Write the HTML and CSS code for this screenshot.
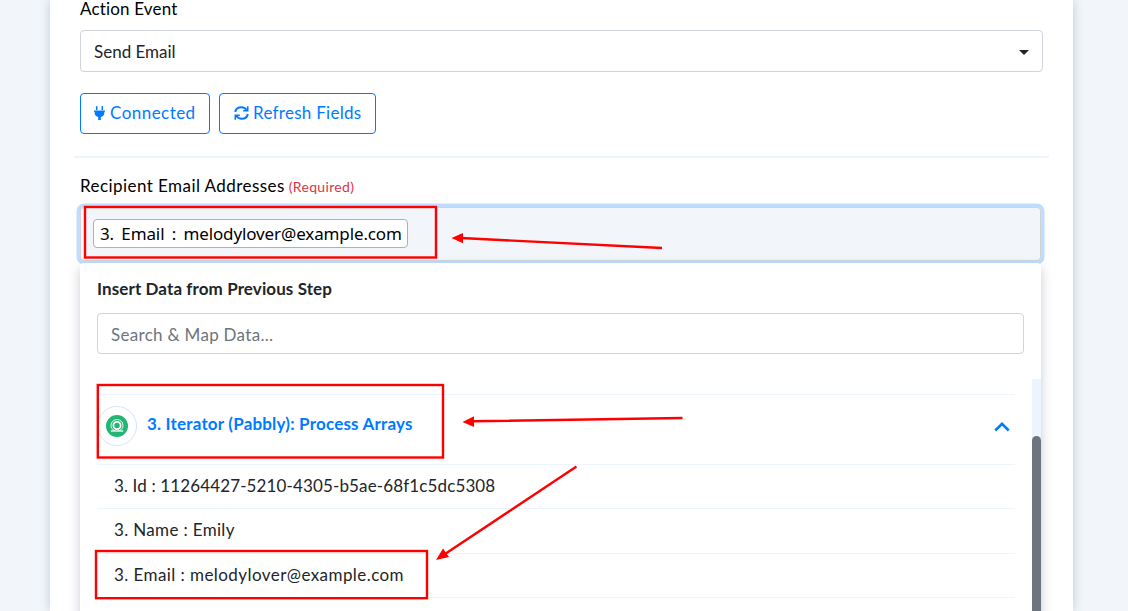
FILE: index.html
```html
<!DOCTYPE html>
<html lang="en">
<head>
<meta charset="utf-8">
<title>Action step</title>
<link rel="stylesheet" href="styles.css">
</head>
<body>
<main class="card">
  <div class="label action-label"><span class="t-action">Action Event</span></div>
  <div class="select"><span class="t-send">Send Email</span><i class="caret"></i></div>
  <div class="buttons">
    <button class="btn btn-connected">
      <svg width="11" height="14" viewBox="0 0 11 14" fill="currentColor"><path d="M2 .8Q2 0 2.75 0T3.5.8V4H2zM7.500.8Q7.500 0 8.250 0T9 .8V4H7.500zM0 4.500h11v1.300h-.7v1.100c0 2-1.300 3.500-3.500 4V14H4.200v-3.100C2 10.400.7 8.900.7 6.900V5.800H0z"/></svg>
      <span class="t-connected">Connected</span>
    </button>
    <button class="btn btn-refresh">
      <svg width="15" height="14" viewBox="0 0 15 14" fill="none" stroke="currentColor" stroke-width="2"><path d="M1.200 6C1.700 3.200 4.300 1.300 7.300 1.300c2.200 0 4 .9 5.200 2.700M13.800 8c-.5 2.800-3.100 4.700-6.100 4.700-2.200 0-4-.9-5.200-2.700"/><path d="M13.700.3v4.500H9.200M1.300 13.700V9.200h4.500" stroke-width="1.600"/></svg>
      <span class="t-refresh">Refresh Fields</span>
    </button>
  </div>
  <hr class="divider">
  <div class="label recipient-label"><span class="t-recipient">Recipient Email Addresses</span><span class="required">(Required)</span></div>
  <div class="field"><span class="chip"><span class="t-chip">3. Email : melodylover@example.com</span></span></div>
  <section class="dropdown">
    <div class="picker">
      <h2 class="title"><span class="t-title">Insert Data from Previous Step</span></h2>
      <div class="search"><span class="t-search">Search &amp; Map Data...</span></div>
    </div>
    <div class="scroller">
      <div class="list">
        <div class="group">
          <span class="app-icon">
            <svg width="22" height="22" viewBox="0 0 22 22"><circle cx="11" cy="11" r="11" fill="#22b573"/><g fill="none" stroke="#fff"><circle cx="11" cy="10.500" r="3.600" stroke-width="1.700"/><path d="M6.500 14.500A6 6 0 1 1 15.500 14.500" stroke-width=".9"/><path d="M4.800 16h12.400" stroke-width="1.300"/><path d="M7 14.500l2 1.300M15 14.500l-2 1.300" stroke-width=".8"/></g></svg>
          </span>
          <span class="t-group">3. Iterator (Pabbly): Process Arrays</span>
          <svg class="chevron" width="16" height="10" viewBox="0 0 16 10" fill="none" stroke="#007bff" stroke-width="2.600"><path d="M1.300 8.500L8 1.900l6.700 6.600"/></svg>
        </div>
        <div class="row"><span class="t-id">3. Id : 11264427-5210-4305-b5ae-68f1c5dc5308</span></div>
        <div class="row row-name"><span class="t-name">3. Name : Emily</span></div>
        <div class="row"><span class="t-email">3. Email : melodylover@example.com</span></div>
        <div class="row"></div>
      </div>
      <div class="track"><div class="thumb"></div></div>
    </div>
  </section>
</main>
<svg class="annotations" width="1128" height="611" viewBox="0 0 1128 611">
  <g fill="none" stroke="#f00" stroke-width="2.400">
    <rect x="85" y="207" width="351" height="50.500"/>
    <rect x="97.800" y="385" width="345.200" height="72.500"/>
    <rect x="96" y="551" width="331" height="47.200"/>
    <path d="M662 248L461 238M682.500 418L472 421.300M576.500 466.500L445 554"/>
  </g>
  <path fill="#f00" d="M451.500 238L463 233v10.200zM462.500 422L474 416.300v10.700zM436 560L443 548.500l6 8.500z"/>
</svg>
</body>
</html>
```

FILE: styles.css
```css
* { box-sizing: border-box; }
body {
  margin: 0;
  height: 611px;
  overflow: hidden;
  background: #f2f6fa;
  color: #212529;
  font: 17px/24px Lato, "Open Sans", sans-serif;
}
span { white-space: nowrap; }
.card {
  width: 1023px;
  height: 611px;
  margin-left: 50px;
  padding: 0 30px;
  overflow: hidden;
  background: #fff;
  box-shadow: 0 0 10px rgba(60, 90, 120, .28);
}
.label { color: #000; height: 24px; display: flex; align-items: center; }
.action-label { height: 21px; line-height: 18px; align-items: flex-start; }
.t-action { letter-spacing: .17px; }
.select {
  width: 963px;
  height: 42px;
  margin-top: 9px;
  padding: 2px 13px 0;
  display: flex;
  align-items: center;
  justify-content: space-between;
  border: 1px solid #ced4da;
  border-radius: 4px;
}
.caret {
  border: 5px solid transparent;
  border-top-color: #212529;
  border-bottom: 0;
}
.buttons { display: flex; gap: 9px; margin-top: 21px; }
.btn {
  height: 41px;
  padding: 0 13px 2px;
  display: flex;
  align-items: center;
  border: 1px solid #007bff;
  border-radius: 4px;
  background: #fff;
  color: #007bff;
  font: inherit;
}
.btn svg { margin-top: 1px; flex: none; }
.btn-connected { width: 130px; gap: 5px; }
.btn-refresh { width: 157px; gap: 4px; padding-left: 14px; }
.t-connected { letter-spacing: .46px; }
.t-refresh { letter-spacing: .28px; }
.divider { width: 975px; height: 2px; margin: 22px 0 0 -6px; border: 0; background: #ecf5ff; }
.recipient-label { margin-top: 16px; gap: 4px; }
.t-recipient { letter-spacing: .44px; }
.required { color: #dc3545; font-size: 14px; letter-spacing: .32px; padding-top: 2px; }
.field {
  width: 961px;
  height: 54px;
  margin-top: 9px;
  padding: 0 12px 2px;
  display: flex;
  align-items: center;
  border: 1px solid #ced4da;
  border-radius: 4px;
  background: #f2f6fa;
  box-shadow: 0 0 0 3.500px #bfdeff;
}
.chip {
  width: 315px;
  height: 29px;
  padding: 1px 6px 0;
  display: flex;
  align-items: center;
  border: 1px solid #adb0b5;
  border-radius: 4px;
  background: #fff;
  color: #000;
  font: 17px/24px "Noto Sans", sans-serif;
}
.t-chip { letter-spacing: -.12px; word-spacing: 3px; }
.dropdown {
  width: 961px;
  height: 380px;
  margin-top: 2px;
  position: relative;
  background: #fff;
  border-radius: 4px;
  box-shadow: 0 5px 12px rgba(60, 70, 90, .28);
}
.picker { padding: 14px 17px 0; }
.title { margin: 0; font-size: 17px; line-height: 24px; font-weight: 700; }
.t-title { letter-spacing: .1px; }
.search {
  height: 41px;
  margin-top: 12px;
  padding: 2px 13px 0;
  display: flex;
  align-items: center;
  border: 1px solid #ced4da;
  border-radius: 4px;
  color: #6c757d;
}
.t-search { letter-spacing: .3px; }
.scroller { margin-top: 25px; padding-left: 17px; display: flex; justify-content: space-between; }
.list { width: 918px; padding-top: 15px; }
.group {
  height: 70px;
  padding: 0 5px 8px 0;
  display: flex;
  align-items: center;
  border-top: 1px solid #ecf5ff;
  color: #007bff;
  font-weight: 700;
}
.app-icon {
  width: 40px;
  height: 40px;
  margin: 0 10px 0 0;
  display: grid;
  place-items: center;
  border: 1px solid #d7e3ff;
  border-radius: 50%;
}
.t-group { margin-top: -3px; letter-spacing: .19px; }
.chevron { margin-left: auto; margin-top: 2px; }
.row {
  height: 44px;
  padding: 0 17px 2px;
  display: flex;
  align-items: center;
  border-top: 1px solid #ecf5ff;
}
.row-name { height: 45px; }
.t-id { letter-spacing: .13px; }
.t-name { letter-spacing: .34px; }
.t-email { letter-spacing: .43px; }
.track { width: 9px; height: 240px; padding-top: 57px; background: #ecf5ff; }
.thumb { height: 100%; border-radius: 5px 5px 0 0; background: #6c757d; }
.annotations { position: absolute; left: 0; top: 0; }
```
